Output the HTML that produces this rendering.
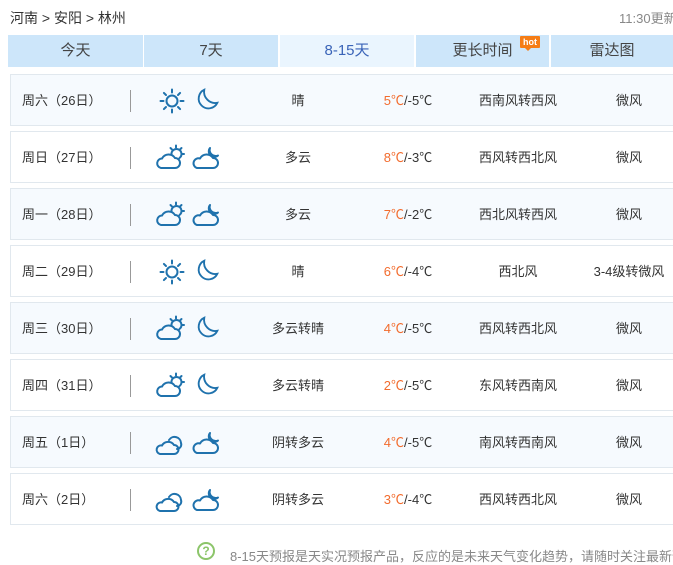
<!DOCTYPE html>
<html><head><meta charset="utf-8">
<style>
*{margin:0;padding:0;box-sizing:border-box}
body{width:673px;height:549px;overflow:hidden;background:#fff;font-family:"Liberation Sans","Noto Sans CJK SC",sans-serif;color:#333;position:relative}
.crumb{position:absolute;left:10px;top:8px;font-size:14px;color:#333}
.upd{position:absolute;left:619px;top:8px;font-size:13px;color:#888;white-space:nowrap}
.tab{position:absolute;top:35px;height:32px;background:#cde6fa;text-align:center;line-height:32px;font-size:15px;color:#444}
.tab.on{background:#eaf5fe;color:#3a64b8}
.hot{position:absolute;left:520px;top:36px;width:20px;height:12px;background:#f57d16;color:#fff;font-size:9px;line-height:12px;text-align:center;font-weight:bold;border-radius:1px}
.hot:after{content:"";position:absolute;left:5px;bottom:-3px;border:3px solid transparent;border-top-color:#f57d16;border-bottom:0}
.row{position:absolute;left:10px;width:670px;height:52px;border:1px solid #e1e8ee;font-size:13px;color:#333}
.row.b{background:#f6fafe}
.row span{position:absolute;top:15px;white-space:nowrap}
.d{left:11px}
.sep{position:absolute;left:119px;top:15px;width:1px;height:22px;background:#999}
.c{transform:translateX(-50%)}
.hi{color:#f26c2e;font-style:normal}
.row svg{position:absolute;top:11px;overflow:visible}
.foot{position:absolute;left:230px;top:546px;font-size:13px;color:#888;white-space:nowrap}
.q{position:absolute;left:197px;top:542px;width:18px;height:18px;border:2px solid #8cc56a;border-radius:50%;color:#8cc56a;font-size:12px;text-align:center;line-height:14px;font-weight:bold}
</style></head><body>
<svg width="0" height="0" style="position:absolute">
<defs>
<g id="sun" fill="none" stroke="#1f72ad" stroke-width="2" stroke-linecap="round">
<circle cx="16" cy="15" r="5.5"/>
<path d="M16 3.5v3M16 23.5v3M4.5 15h3M24.5 15h3M7.9 6.9l2.1 2.1M22 21l2.1 2.1M7.9 23.1l2.1-2.1M22 9l2.1-2.1"/>
</g>
<g id="moon" fill="none" stroke="#1f72ad" stroke-width="2">
<path d="M11 4A10.5 10.5 0 1 0 25 18A12 12 0 0 1 11 4Z"/>
</g>
<g id="cs" fill="none" stroke="#1f72ad" stroke-width="2" stroke-linecap="round">
<path d="M6 25H20A5 5 0 0 0 20 15A7.5 7.5 0 0 0 7 15.5A4.8 4.8 0 0 0 6 25Z"/>
<path d="M16.5 11.5A5 5 0 1 1 24.5 15"/>
<path d="M21 2.5v2M26.5 5l-1.5 1.5M29 11h-2M15.5 5l1.5 1.5"/>
</g>
<g id="cm" fill="none" stroke="#1f72ad" stroke-width="2" stroke-linecap="round" stroke-linejoin="round">
<path d="M5 25H21A5 5 0 0 0 21 15A7.5 7.5 0 0 0 8 15.5A4.8 4.8 0 0 0 5 25Z"/>
<path d="M18 5A5.5 5.5 0 0 0 26 12.5A6 6 0 0 1 18 5Z"/>
</g>
<g id="ov" fill="none" stroke="#1f72ad" stroke-width="2" stroke-linecap="round">
<path d="M14 12A6.5 6.5 0 0 1 26 15A4.5 4.5 0 0 1 22 21"/>
<path d="M5 26H19A4.5 4.5 0 0 0 19 17A7 7 0 0 0 7 17.5A4.3 4.3 0 0 0 5 26Z"/>
</g>
</defs></svg>

<div class="crumb">河南 &gt; 安阳 &gt; 林州</div>
<div class="upd">11:30更新</div>
<div class="tab" style="left:8px;width:135px">今天</div>
<div class="tab" style="left:144px;width:134px">7天</div>
<div class="tab on" style="left:280px;width:134px">8-15天</div>
<div class="tab" style="left:416px;width:133px">更长时间</div>
<div class="hot">hot</div>
<div class="tab" style="left:551px;width:130px;padding-right:8px">雷达图</div>

<div class="row b" style="top:74px"><span class="d">周六（26日）</span><div class="sep"></div>
<svg style="left:145px" width="32" height="30" viewBox="0 0 32 30"><use href="#sun"/></svg><svg style="left:183px" width="28" height="28" viewBox="0 0 30 30"><use href="#moon"/></svg>
<span class="c" style="left:287px">晴</span><span class="c" style="left:397px"><i class="hi">5℃</i>/-5℃</span><span class="c" style="left:507px">西南风转西风</span><span class="c" style="left:618px">微风</span></div>

<div class="row" style="top:131px"><span class="d">周日（27日）</span><div class="sep"></div>
<svg style="left:144px" width="32" height="28" viewBox="0 0 32 28"><use href="#cs"/></svg><svg style="left:181px" width="30" height="28" viewBox="0 0 30 28"><use href="#cm"/></svg>
<span class="c" style="left:287px">多云</span><span class="c" style="left:397px"><i class="hi">8℃</i>/-3℃</span><span class="c" style="left:507px">西风转西北风</span><span class="c" style="left:618px">微风</span></div>

<div class="row b" style="top:188px"><span class="d">周一（28日）</span><div class="sep"></div>
<svg style="left:144px" width="32" height="28" viewBox="0 0 32 28"><use href="#cs"/></svg><svg style="left:181px" width="30" height="28" viewBox="0 0 30 28"><use href="#cm"/></svg>
<span class="c" style="left:287px">多云</span><span class="c" style="left:397px"><i class="hi">7℃</i>/-2℃</span><span class="c" style="left:507px">西北风转西风</span><span class="c" style="left:618px">微风</span></div>

<div class="row" style="top:245px"><span class="d">周二（29日）</span><div class="sep"></div>
<svg style="left:145px" width="32" height="30" viewBox="0 0 32 30"><use href="#sun"/></svg><svg style="left:183px" width="28" height="28" viewBox="0 0 30 30"><use href="#moon"/></svg>
<span class="c" style="left:287px">晴</span><span class="c" style="left:397px"><i class="hi">6℃</i>/-4℃</span><span class="c" style="left:507px">西北风</span><span class="c" style="left:618px">3-4级转微风</span></div>

<div class="row b" style="top:302px"><span class="d">周三（30日）</span><div class="sep"></div>
<svg style="left:144px" width="32" height="28" viewBox="0 0 32 28"><use href="#cs"/></svg><svg style="left:183px" width="28" height="28" viewBox="0 0 30 30"><use href="#moon"/></svg>
<span class="c" style="left:287px">多云转晴</span><span class="c" style="left:397px"><i class="hi">4℃</i>/-5℃</span><span class="c" style="left:507px">西风转西北风</span><span class="c" style="left:618px">微风</span></div>

<div class="row" style="top:359px"><span class="d">周四（31日）</span><div class="sep"></div>
<svg style="left:144px" width="32" height="28" viewBox="0 0 32 28"><use href="#cs"/></svg><svg style="left:183px" width="28" height="28" viewBox="0 0 30 30"><use href="#moon"/></svg>
<span class="c" style="left:287px">多云转晴</span><span class="c" style="left:397px"><i class="hi">2℃</i>/-5℃</span><span class="c" style="left:507px">东风转西南风</span><span class="c" style="left:618px">微风</span></div>

<div class="row b" style="top:416px"><span class="d">周五（1日）</span><div class="sep"></div>
<svg style="left:144px" width="32" height="28" viewBox="0 0 32 28"><use href="#ov"/></svg><svg style="left:181px" width="30" height="28" viewBox="0 0 30 28"><use href="#cm"/></svg>
<span class="c" style="left:287px">阴转多云</span><span class="c" style="left:397px"><i class="hi">4℃</i>/-5℃</span><span class="c" style="left:507px">南风转西南风</span><span class="c" style="left:618px">微风</span></div>

<div class="row" style="top:473px"><span class="d">周六（2日）</span><div class="sep"></div>
<svg style="left:144px" width="32" height="28" viewBox="0 0 32 28"><use href="#ov"/></svg><svg style="left:181px" width="30" height="28" viewBox="0 0 30 28"><use href="#cm"/></svg>
<span class="c" style="left:287px">阴转多云</span><span class="c" style="left:397px"><i class="hi">3℃</i>/-4℃</span><span class="c" style="left:507px">西风转西北风</span><span class="c" style="left:618px">微风</span></div>

<div class="q">?</div>
<div class="foot">8-15天预报是天实况预报产品，反应的是未来天气变化趋势，请随时关注最新预报</div>
</body></html>
